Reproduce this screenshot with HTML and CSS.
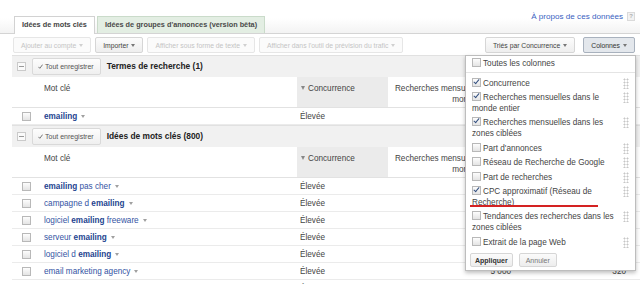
FILE: index.html
```html
<!DOCTYPE html>
<html lang="fr">
  <head>
    <meta charset="UTF-8" />
    <meta name="viewport" content="width=device-width, initial-scale=1.0" />
    <title>Idées de mots clés</title>
    <link rel="stylesheet" href="styles.css">
  </head>
  <body>
    <div class="page">
      <div class="topbar">
        <div class="tabs">
          <span class="tab active">Idées de mots clés</span>
          <span class="tab beta">Idées de groupes d'annonces (version bêta)</span>
        </div>
        <a class="about" href="#">À propos de ces données <span class="help">?</span></a>
      </div>

      <div class="toolbar">
        <button class="btn" disabled>Ajouter au compte <span class="caret"></span></button>
        <button class="btn">Importer <span class="caret"></span></button>
        <button class="btn" disabled>Afficher sous forme de texte <span class="caret"></span></button>
        <button class="btn" disabled>Afficher dans l'outil de prévision du trafic <span class="caret"></span></button>
        <div class="toolbar-right">
          <button class="btn">Triés par Concurrence <span class="caret"></span></button>
          <div class="cols-wrap">
            <button class="btn pressed">Colonnes <span class="caret"></span></button>

            <div class="col-menu">
              <div class="col-all"><span class="cb"></span>Toutes les colonnes</div>
              <ul class="col-list">
                <li><span class="lbl"><span class="cb on"></span>Concurrence</span><span class="grip"></span></li>
                <li><span class="lbl"><span class="cb on"></span>Recherches mensuelles dans le monde entier</span><span class="grip"></span></li>
                <li><span class="lbl"><span class="cb on"></span>Recherches mensuelles dans les zones ciblées</span><span class="grip"></span></li>
                <li><span class="lbl"><span class="cb"></span>Part d'annonces</span><span class="grip"></span></li>
                <li><span class="lbl"><span class="cb"></span>Réseau de Recherche de Google</span><span class="grip"></span></li>
                <li><span class="lbl"><span class="cb"></span>Part de recherches</span><span class="grip"></span></li>
                <li><span class="lbl"><span class="cb on"></span>CPC approximatif (Réseau de Recherche)</span><span class="grip"></span><span class="mark"></span></li>
                <li><span class="lbl"><span class="cb"></span>Tendances des recherches dans les zones ciblées</span><span class="grip"></span></li>
                <li><span class="lbl"><span class="cb"></span>Extrait de la page Web</span><span class="grip"></span></li>
              </ul>
              <div class="menu-actions">
                <button class="apply">Appliquer</button>
                <button>Annuler</button>
              </div>
            </div>
          </div>
        </div>
      </div>

      <div class="results">
        <!-- search terms -->
        <div class="section-head">
          <span class="collapse"></span>
          <button class="save-all"><svg width="5" height="5" viewBox="0 0 5 5"><path d="M0.4 2.8 L1.8 4.3 L4.6 0.6" fill="none" stroke="#666" stroke-width="0.9"/></svg>Tout enregistrer</button>
          <span class="section-title">Termes de recherche (1)</span>
        </div>
        <div class="grid-row col-head">
          <div></div>
          <div class="c-kw">Mot clé</div>
          <div class="c-comp sorted"><span class="sort-arrow"></span>Concurrence</div>
          <div class="c-num">Recherches mensuelles dans le monde entier<span class="hint">?</span></div>
          <div class="c-num">Recherches mensuelles dans les zones ciblées<span class="hint">?</span></div>
          <div></div>
        </div>
        <div class="grid-row">
          <div class="c-check"><span class="cb"></span></div>
          <div class="c-kw"><a class="kw" href="#"><b>emailing</b></a><span class="kw-caret"></span></div>
          <div class="c-comp">Élevée</div>
          <div class="c-num"></div>
          <div class="c-num"></div>
          <div></div>
        </div>

        <!-- keyword ideas -->
        <div class="section-head">
          <span class="collapse"></span>
          <button class="save-all"><svg width="5" height="5" viewBox="0 0 5 5"><path d="M0.4 2.8 L1.8 4.3 L4.6 0.6" fill="none" stroke="#666" stroke-width="0.9"/></svg>Tout enregistrer</button>
          <span class="section-title">Idées de mots clés (800)</span>
        </div>
        <div class="grid-row col-head">
          <div></div>
          <div class="c-kw">Mot clé</div>
          <div class="c-comp sorted"><span class="sort-arrow"></span>Concurrence</div>
          <div class="c-num">Recherches mensuelles dans le monde entier<span class="hint">?</span></div>
          <div class="c-num">Recherches mensuelles dans les zones ciblées<span class="hint">?</span></div>
          <div></div>
        </div>
        <div class="grid-row">
          <div class="c-check"><span class="cb"></span></div>
          <div class="c-kw"><a class="kw" href="#"><b>emailing</b> pas cher</a><span class="kw-caret"></span></div>
          <div class="c-comp">Élevée</div>
          <div class="c-num"></div>
          <div class="c-num"></div>
          <div></div>
        </div>
        <div class="grid-row">
          <div class="c-check"><span class="cb"></span></div>
          <div class="c-kw"><a class="kw" href="#">campagne d <b>emailing</b></a><span class="kw-caret"></span></div>
          <div class="c-comp">Élevée</div>
          <div class="c-num"></div>
          <div class="c-num"></div>
          <div></div>
        </div>
        <div class="grid-row">
          <div class="c-check"><span class="cb"></span></div>
          <div class="c-kw"><a class="kw" href="#">logiciel <b>emailing</b> freeware</a><span class="kw-caret"></span></div>
          <div class="c-comp">Élevée</div>
          <div class="c-num"></div>
          <div class="c-num"></div>
          <div></div>
        </div>
        <div class="grid-row">
          <div class="c-check"><span class="cb"></span></div>
          <div class="c-kw"><a class="kw" href="#">serveur <b>emailing</b></a><span class="kw-caret"></span></div>
          <div class="c-comp">Élevée</div>
          <div class="c-num"></div>
          <div class="c-num"></div>
          <div></div>
        </div>
        <div class="grid-row">
          <div class="c-check"><span class="cb"></span></div>
          <div class="c-kw"><a class="kw" href="#">logiciel d <b>emailing</b></a><span class="kw-caret"></span></div>
          <div class="c-comp">Élevée</div>
          <div class="c-num"></div>
          <div class="c-num"></div>
          <div></div>
        </div>
        <div class="grid-row">
          <div class="c-check"><span class="cb"></span></div>
          <div class="c-kw"><a class="kw" href="#">email marketing agency</a><span class="kw-caret"></span></div>
          <div class="c-comp">Élevée</div>
          <div class="c-num">5 000</div>
          <div class="c-num">320</div>
          <div></div>
        </div>
        <div class="grid-row">
          <div class="c-check"><span class="cb"></span></div>
          <div class="c-kw"></div>
          <div class="c-comp">Élevée</div>
          <div class="c-num"></div>
          <div class="c-num"></div>
          <div></div>
        </div>
      </div>
    </div>
  </body>
</html>
```

FILE: styles.css
```css
body {
  margin: 0;
  font-family: "Liberation Sans", Arial, sans-serif;
  font-size: 8.2px;
  line-height: 11px;
  color: #333;
  background: #fff;
  overflow: hidden;
}
.page {
  width: 640px;
}
a {
  text-decoration: none;
}
button {
  font-family: inherit;
  margin: 0;
}

/* tabs */
.topbar {
  display: flex;
  justify-content: space-between;
  height: 33px;
  padding: 0 5px 0 14px;
  border-bottom: 1px solid #d4d4d4;
  background: linear-gradient(#fff 55%, #f3f3f3);
}
.tabs {
  display: flex;
  align-items: flex-end;
  align-self: flex-end;
  gap: 2px;
}
.tab {
  height: 17px;
  box-sizing: border-box;
  padding: 0 7px;
  border: 1px solid #d2d2d2;
  border-bottom: none;
  font-size: 7.3px;
  font-weight: bold;
  line-height: 16px;
  color: #444;
}
.tab.active {
  height: 18px;
  margin-bottom: -1px;
  background: #fff;
}
.tab.beta {
  background: #e3eee3;
  border-color: #cadbca;
  color: #4a4a4a;
}
.about {
  align-self: flex-start;
  display: flex;
  align-items: center;
  gap: 4px;
  margin-top: 11px;
  font-size: 8.1px;
  color: #3a5fbf;
}
.help {
  width: 6px;
  height: 7px;
  border: 1px solid #dadada;
  background: #f2f2f2;
  color: #b0b0b0;
  font-size: 6px;
  line-height: 7px;
  text-align: center;
  font-weight: bold;
}

/* toolbar */
.toolbar {
  display: flex;
  align-items: center;
  gap: 4px;
  padding: 3px 5px 2px 13px;
}
.btn {
  display: inline-flex;
  align-items: center;
  height: 16px;
  box-sizing: border-box;
  padding: 0 7px;
  border: 1px solid #d6d6d6;
  border-radius: 2px;
  background: linear-gradient(#fcfcfc, #eeeeee);
  color: #444;
  font-size: 6.8px;
}
.btn:disabled {
  color: #c4c4c4;
  background: #fbfbfb;
  border-color: #e6e6e6;
}
.caret {
  display: inline-block;
  margin-left: 3px;
  border-left: 2.5px solid transparent;
  border-right: 2.5px solid transparent;
  border-top: 3px solid #777;
}
.btn:disabled .caret {
  border-top-color: #d0d0d0;
}
.btn.pressed {
  background: #e3e7ec;
  border-color: #a9b2be;
  color: #333;
}
.toolbar-right {
  display: flex;
  gap: 8px;
  margin-left: auto;
}
.cols-wrap {
  position: relative;
}

/* column chooser */
.col-menu {
  position: absolute;
  top: calc(100% + 2px);
  right: -1px;
  z-index: 5;
  width: 171px;
  box-sizing: border-box;
  background: #fff;
  border: 1px solid #bdbdbd;
  box-shadow: 0 2px 4px rgba(0, 0, 0, 0.25);
  font-size: 8.2px;
  line-height: 11px;
  color: #444;
}
.col-all {
  padding: 2px 6px 3px;
  border-bottom: 1px solid #e4e4e4;
}
.col-list {
  list-style: none;
  margin: 0;
  padding: 3px 0 0;
}
.col-list li {
  position: relative;
  display: flex;
  gap: 2px;
  padding: 1.7px 6px;
}
.lbl {
  flex: 1;
}
.grip {
  flex: none;
  width: 6px;
  height: 11px;
  background-image: radial-gradient(circle, #c6c6c6 0.8px, transparent 1.2px);
  background-size: 3px 3px;
}
.mark {
  position: absolute;
  left: 4px;
  bottom: 3px;
  width: 128px;
  height: 2px;
  background: #d42222;
}
.cb {
  position: relative;
  display: inline-block;
  width: 7px;
  height: 7px;
  margin-right: 2px;
  vertical-align: -1px;
  border: 1px solid #b8b8b8;
  background: linear-gradient(#fdfdfd, #e4e4e4);
}
.cb.on::after {
  content: "";
  position: absolute;
  left: 2px;
  top: -1px;
  width: 2px;
  height: 5px;
  border: solid #34507f;
  border-width: 0 1.3px 1.3px 0;
  transform: rotate(40deg);
}
.menu-actions {
  display: flex;
  gap: 6px;
  padding: 4px 4px 3px;
}
.menu-actions button {
  height: 14px;
  padding: 0 6px;
  border: 1px solid #d6d6d6;
  border-radius: 2px;
  background: linear-gradient(#fbfbfb, #ededed);
  font-size: 7px;
  color: #777;
}
.menu-actions .apply {
  padding: 0 4px;
  font-weight: bold;
  color: #333;
}

/* results */
.results {
  padding-left: 12px;
}
.section-head {
  display: flex;
  align-items: center;
  gap: 6px;
  height: 22px;
  box-sizing: border-box;
  padding-left: 5px;
  border-top: 1px solid #e1e1e1;
  background: #f1f1f1;
}
.collapse {
  width: 7px;
  height: 7px;
  border: 1px solid #cacaca;
  background: linear-gradient(#999, #999) center / 5px 1px no-repeat, #fafafa;
}
.save-all {
  display: inline-flex;
  align-items: center;
  gap: 2px;
  height: 17px;
  padding: 0 6px 0 5px;
  border: 1px solid #d9d9d9;
  border-radius: 2px;
  background: linear-gradient(#fdfdfd, #efefef);
  font-size: 7px;
  color: #555;
}
.section-title {
  font-size: 8.4px;
  font-weight: bold;
  color: #222;
}
.grid-row {
  display: grid;
  grid-template-columns: 28px 257px 91px 127px 117px 8px;
  align-items: center;
  height: 17px;
  box-sizing: border-box;
  border-bottom: 1px solid #ebebeb;
  white-space: nowrap;
}
.grid-row.col-head {
  align-items: stretch;
  height: 31px;
  border-bottom-color: #e2e2e2;
  white-space: normal;
  color: #444;
}
.col-head > div {
  padding-top: 6px;
}
.c-check {
  justify-self: center;
  display: flex;
}
.c-check .cb {
  margin: 0;
}
.c-kw {
  padding-left: 4px;
}
.c-comp {
  padding-left: 3px;
  color: #444;
}
.c-comp.sorted {
  background: #ebebeb;
}
.sort-arrow {
  display: inline-block;
  margin: 0 3px 0 1px;
  vertical-align: 1px;
  border-left: 2.5px solid transparent;
  border-right: 2.5px solid transparent;
  border-top: 4px solid #888;
}
.c-num {
  padding-right: 4px;
  text-align: right;
  color: #444;
}
.grid-row > .c-num + .c-num {
  padding-right: 6px;
}
.hint {
  display: inline-block;
  width: 6px;
  height: 7px;
  margin-left: 3px;
  border: 1px solid #ddd;
  background: #f3f3f3;
  color: #b0b0b0;
  font-size: 6px;
  line-height: 7px;
  text-align: center;
}
.kw {
  color: #3353a3;
}
.kw b {
  color: #24448f;
}
.kw-caret {
  display: inline-block;
  margin-left: 4px;
  vertical-align: 1px;
  border-left: 2.5px solid transparent;
  border-right: 2.5px solid transparent;
  border-top: 3px solid #a0a0a0;
}
```
